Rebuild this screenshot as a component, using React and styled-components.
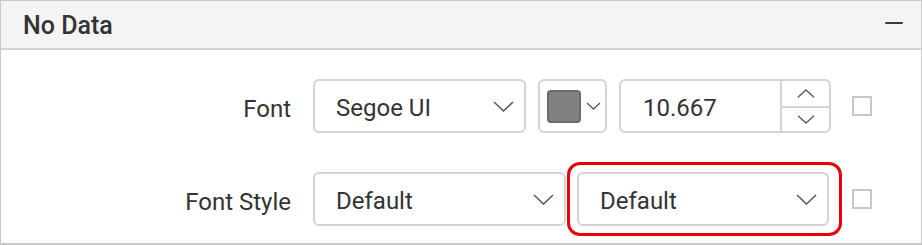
import React from 'react';
import styled, { createGlobalStyle } from 'styled-components';

const GlobalStyle = createGlobalStyle`
  html, body {
    margin: 0;
    padding: 0;
    background: #ffffff;
  }
  body {
    font-family: Roboto, "Liberation Sans", sans-serif;
    color: #333333;
  }
`;

const Panel = styled.div`
  width: 922px;
  height: 245px;
  box-sizing: border-box;
  border: 1px solid #c8c8c8;
  border-bottom-width: 2px;
  background: #ffffff;
  display: flex;
  flex-direction: column;
`;

const Header = styled.div`
  height: 49px;
  background: #f4f4f4;
  border-bottom: 2px solid #d2d2d2;
  display: flex;
  align-items: center;
  justify-content: space-between;
  padding: 0 18px 0 22px;
  box-sizing: border-box;
  flex-shrink: 0;
`;

const Title = styled.span`
  font-size: 25px;
  font-weight: 500;
  color: #333333;
  padding-top: 1px;
`;

const Collapse = styled.span`
  width: 18px;
  height: 2px;
  margin-bottom: 4px;
  background: #3a3a3a;
  border-radius: 1px;
`;

const Body = styled.div`
  display: grid;
  grid-template-columns: 290px auto;
  column-gap: 22px;
  row-gap: 39px;
  padding-top: 29px;
  align-items: center;
`;

const Label = styled.label`
  justify-self: end;
  font-size: 24px;
  color: #333333;
  padding-top: 5px;
`;

const Controls = styled.div`
  display: flex;
  align-items: center;
`;

const Box = styled.div`
  position: relative;
  box-sizing: border-box;
  height: 54px;
  width: ${p => p.$w}px;
  margin-right: ${p => p.$gap || 0}px;
  border: 2px solid #d4d4d4;
  border-radius: 6px;
  background: #ffffff;
  display: flex;
  align-items: center;
  flex-shrink: 0;
`;

const Value = styled.span`
  flex: 1;
  font-size: 24px;
  color: #333333;
  padding-left: ${p => p.$pad || 21}px;
  padding-top: 4px;
`;

const Chevron = styled.svg`
  flex-shrink: 0;
  margin-right: ${p => p.$mr || 0}px;
  margin-left: ${p => p.$ml || 0}px;
`;

const Swatch = styled.span`
  width: 34px;
  height: 33px;
  box-sizing: border-box;
  margin-left: 7px;
  background: #808080;
  border: 2px solid #6a6a6a;
  border-radius: 4px;
  flex-shrink: 0;
`;

const Spinner = styled.div`
  align-self: stretch;
  width: 47px;
  border-left: 2px solid #d4d4d4;
  display: grid;
  grid-template-rows: 1fr 1fr;
`;

const SpinButton = styled.div`
  display: flex;
  align-items: center;
  justify-content: center;
  & + & {
    border-top: 2px solid #d4d4d4;
  }
`;

const Check = styled.span`
  width: 20px;
  height: 20px;
  box-sizing: border-box;
  border: 2px solid #c8c8c8;
  flex-shrink: 0;
`;

const Highlight = styled.span`
  position: absolute;
  left: -12px;
  right: -15px;
  top: -12px;
  bottom: -12px;
  border: 3px solid #e8000b;
  border-radius: 13px;
  pointer-events: none;
`;

const Down = ({ w = 21, h = 11, ...rest }) => (
  <Chevron width={w} height={h} viewBox="0 0 21 11" {...rest}>
    <polyline points="1,1 10.5,10 20,1" fill="none" stroke="#555c66" strokeWidth="1.6" />
  </Chevron>
);

const Up = (props) => (
  <Chevron width={18} height={9} viewBox="0 0 18 9" {...props}>
    <polyline points="1,8.3 9,1 17,8.3" fill="none" stroke="#555c66" strokeWidth="1.4" />
  </Chevron>
);

const Dropdown = ({ width, gap, value, highlight }) => (
  <Box $w={width} $gap={gap}>
    <Value>{value}</Value>
    <Down $mr={10} />
    {highlight && <Highlight />}
  </Box>
);

export default function App() {
  return (
    <>
      <GlobalStyle />
      <Panel>
        <Header>
          <Title>No Data</Title>
          <Collapse />
        </Header>
        <Body>
          <Label>Font</Label>
          <Controls>
            <Dropdown width={213} gap={12} value="Segoe UI" />
            <Box $w={69} $gap={12}>
              <Swatch />
              <Chevron width={15} height={8} viewBox="0 0 15 8" $ml={5}>
                <polyline points="1,1 7.5,7 14,1" fill="none" stroke="#555c66" strokeWidth="1.4" />
              </Chevron>
            </Box>
            <Box $w={212} $gap={21}>
              <Value $pad={22}>10.667</Value>
              <Spinner>
                <SpinButton><Up /></SpinButton>
                <SpinButton>
                  <Chevron width={18} height={9} viewBox="0 0 18 9">
                    <polyline points="1,0.7 9,8 17,0.7" fill="none" stroke="#555c66" strokeWidth="1.4" />
                  </Chevron>
                </SpinButton>
              </Spinner>
            </Box>
            <Check />
          </Controls>

          <Label>Font Style</Label>
          <Controls>
            <Dropdown width={253} gap={11} value="Default" />
            <Dropdown width={252} gap={23} value="Default" highlight />
            <Check />
          </Controls>
        </Body>
      </Panel>
    </>
  );
}
